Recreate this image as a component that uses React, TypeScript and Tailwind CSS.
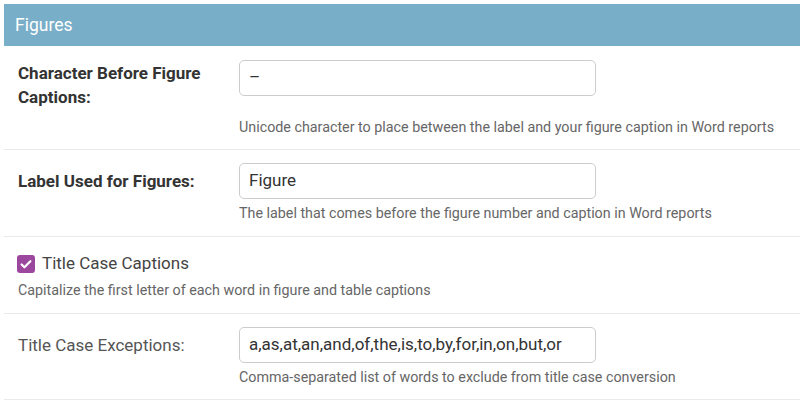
import React from "react";

const font = { fontFamily: "Roboto, 'Liberation Sans', sans-serif" };

function Input({ value }: { value: string }) {
  return (
    <div className="w-[357px] h-[36px] shrink-0 border border-[#cccccc] rounded-[5px] bg-white flex items-center pl-[9px] text-[17px] text-[#333333]">
      {value}
    </div>
  );
}

export default function App() {
  return (
    <div className="w-[800px] h-[408px] bg-white pl-[4px] pt-[4px] overflow-hidden" style={font}>
      <div className="h-[42px] bg-[#79aec8] text-white text-[17.5px] flex items-center pl-[11px]">Figures</div>

      {/* Row 1 */}
      <div className="pt-[14px] pb-[14px] pl-[14px] border-b border-[#eaeaea]">
        <div className="flex items-start">
          <div className="w-[221px] pt-[1px] leading-[24px] text-[17px] font-bold text-[#333333]">
            Character Before Figure
            <br />
            Captions:
          </div>
          <Input value="–" />
        </div>
        <div className="mt-[10px] ml-[221px] text-[14.3px] leading-[16px] text-[#666666]">
          Unicode character to place between the label and your figure caption in Word reports
        </div>
      </div>

      {/* Row 2 */}
      <div className="pt-[13px] pb-[15px] pl-[14px] border-b border-[#eaeaea]">
        <div className="flex items-center">
          <div className="w-[221px] leading-[24px] text-[17px] font-bold text-[#333333]">Label Used for Figures:</div>
          <Input value="Figure" />
        </div>
        <div className="mt-[6px] ml-[221px] text-[14.3px] leading-[16px] text-[#666666]">
          The label that comes before the figure number and caption in Word reports
        </div>
      </div>

      {/* Row 3 */}
      <div className="pt-[15px] pb-[15px] pl-[14px] border-b border-[#eaeaea]">
        <div className="flex items-center h-[24px]">
          <div className="w-[18px] h-[18px] rounded-[3px] bg-[#9b479d] flex items-center justify-center ml-[-1px]">
            <svg width="14" height="14" viewBox="0 0 16 16" fill="none">
              <path d="M3 8.5l3.2 3.2L13 4.8" stroke="white" strokeWidth="2.6" strokeLinecap="round" strokeLinejoin="round" />
            </svg>
          </div>
          <span className="ml-[7px] text-[17px] text-[#444444]">Title Case Captions</span>
        </div>
        <div className="mt-[6px] text-[14.3px] leading-[16px] text-[#666666]">
          Capitalize the first letter of each word in figure and table captions
        </div>
      </div>

      {/* Row 4 */}
      <div className="pt-[13px] pb-[14px] pl-[14px] border-b border-[#eaeaea]">
        <div className="flex items-center">
          <div className="w-[221px] leading-[24px] text-[17px] text-[#555555]">Title Case Exceptions:</div>
          <Input value="a,as,at,an,and,of,the,is,to,by,for,in,on,but,or" />
        </div>
        <div className="mt-[6px] ml-[221px] text-[14.3px] leading-[16px] text-[#666666]">
          Comma-separated list of words to exclude from title case conversion
        </div>
      </div>
    </div>
  );
}
